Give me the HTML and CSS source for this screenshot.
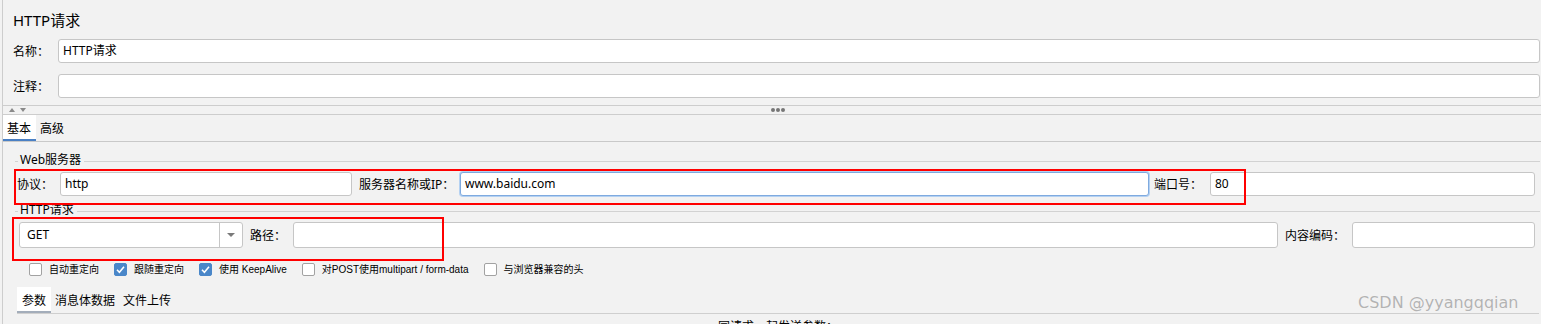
FILE: index.html
```html
<!DOCTYPE html>
<html>
<head>
    <meta charset="utf-8">
    <title>HTTP请求</title>
    <link rel="stylesheet" href="styles.css">
</head>
<body>
    <div class="frame">
        <div class="title">HTTP请求</div>

        <div class="row row-name">
            <label class="lbl lbl-top">名称：</label>
            <div class="input grow">HTTP请求</div>
        </div>
        <div class="row row-comment">
            <label class="lbl lbl-top">注释：</label>
            <div class="input grow"></div>
        </div>

        <div class="splitter">
            <span class="arrow-up"></span>
            <span class="arrow-down"></span>
            <span class="dots"><i></i><i></i><i></i></span>
        </div>

        <div class="tabs">
            <div class="tab active">基本</div>
            <div class="tab">高级</div>
        </div>

        <div class="group group-server">Web服务器</div>
        <div class="row row-server">
            <label class="lbl lbl-protocol">协议：</label>
            <div class="input in-protocol">http</div>
            <label class="lbl lbl-host">服务器名称或IP：</label>
            <div class="input focus in-host">www.baidu.com</div>
            <label class="lbl lbl-port">端口号：</label>
            <div class="input grow">80</div>
        </div>

        <div class="group group-request">HTTP请求</div>
        <div class="row row-request">
            <div class="select">
                <span class="select-value">GET</span>
                <span class="select-btn"><span class="caret"></span></span>
            </div>
            <label class="lbl lbl-path">路径：</label>
            <div class="input grow"></div>
            <label class="lbl lbl-enc">内容编码：</label>
            <div class="input in-enc"></div>
        </div>

        <div class="checks">
            <label class="cb"><span class="box"></span>自动重定向</label>
            <label class="cb"><span class="box checked"><svg viewBox="0 0 13 13" width="13" height="13"><polyline points="3,6.8 5.4,9.2 10,3.8" fill="none" stroke="#fff" stroke-width="1.6"/></svg></span>跟随重定向</label>
            <label class="cb"><span class="box checked"><svg viewBox="0 0 13 13" width="13" height="13"><polyline points="3,6.8 5.4,9.2 10,3.8" fill="none" stroke="#fff" stroke-width="1.6"/></svg></span>使用 KeepAlive</label>
            <label class="cb"><span class="box"></span>对POST使用multipart / form-data</label>
            <label class="cb"><span class="box"></span>与浏览器兼容的头</label>
        </div>

        <div class="subtabs">
            <div class="subtab active">参数</div>
            <div class="subtab">消息体数据</div>
            <div class="subtab">文件上传</div>
        </div>
        <div class="caption">同请求一起发送参数：</div>

        <!-- red annotation boxes drawn over the form -->
        <div class="mark mark-server"></div>
        <div class="mark mark-request"></div>
    </div>

    <div class="watermark">CSDN @yyangqqian</div>
</body>
</html>
```

FILE: styles.css
```css
* {
    box-sizing: border-box;
}

body {
    margin: 0;
    height: 324px;
    overflow: hidden;
    background-color: #f2f2f2;
    font-family: "Noto Sans", "Noto Sans CJK SC", sans-serif;
    font-size: 12px;
    color: #000;
}

.frame {
    position: relative;
    height: 324px;
    margin-left: 2px;
    border-left: 1px solid #cdcdcd;
    overflow: hidden;
}

.title {
    height: 32px;
    padding: 8px 0 0 10px;
    font-size: 15px;
    line-height: 24px;
}

/* form rows */
.row {
    display: flex;
    align-items: center;
}

.row-name {
    margin-top: 7px;
    height: 24px;
    padding: 0 1px 0 10px;
}

.row-comment {
    margin-top: 11px;
    height: 24px;
    padding: 0 1px 0 10px;
}

.row-server {
    margin-top: 4px;
    height: 24px;
    padding: 0 6px 0 14px;
}

.row-request {
    margin-top: 4px;
    height: 26px;
    padding: 0 6px 0 16px;
}

.lbl {
    flex: none;
    white-space: nowrap;
}

.lbl-top { width: 45px; }
.lbl-protocol { width: 43px; }
.lbl-host { width: 101px; margin-left: 7px; }
.lbl-port { width: 56px; margin-left: 5px; }
.lbl-path { width: 43px; margin-left: 7px; }
.lbl-enc { width: 67px; margin-left: 7px; }

.input {
    height: 100%;
    padding-left: 4px;
    line-height: 22px;
    background-color: #fff;
    border: 1px solid #c6c6c6;
    border-radius: 3px;
    white-space: nowrap;
    overflow: hidden;
}

.grow { flex: 1; }
.in-protocol { width: 292px; }
.in-host { width: 689px; }
.in-enc { width: 183px; }

.input.focus {
    border-color: #7faadf;
    box-shadow: 0 0 0 1px #b4d1f2;
}

.select {
    display: flex;
    width: 224px;
    height: 100%;
    background-color: #fff;
    border: 1px solid #c6c6c6;
    border-radius: 3px;
}

.select-value {
    flex: 1;
    padding-left: 7px;
    line-height: 24px;
}

.select-btn {
    width: 23px;
    display: flex;
    align-items: center;
    justify-content: center;
    border-left: 1px solid #c6c6c6;
}

.caret {
    width: 0;
    height: 0;
    border-left: 4px solid transparent;
    border-right: 4px solid transparent;
    border-top: 4px solid #7a7a7a;
}

/* split handle */
.splitter {
    display: flex;
    align-items: center;
    gap: 5px;
    margin-top: 7px;
    height: 10px;
    padding-left: 6px;
    border-top: 1px solid #cdcdcd;
    border-bottom: 1px solid #cdcdcd;
}

.arrow-up {
    width: 0;
    height: 0;
    border-left: 3px solid transparent;
    border-right: 3px solid transparent;
    border-bottom: 4px solid #8a8a8a;
}

.arrow-down {
    width: 0;
    height: 0;
    border-left: 3px solid transparent;
    border-right: 3px solid transparent;
    border-top: 4px solid #8a8a8a;
}

.dots {
    display: flex;
    gap: 1px;
    margin-left: 740px;
}

.dots i {
    width: 4px;
    height: 4px;
    border-radius: 50%;
    background-color: #767676;
}

/* tabs */
.tabs {
    display: flex;
    height: 27px;
    border-bottom: 1px solid #c9c9c9;
}

.tab {
    height: 26px;
    padding: 3px 5px 0 4px;
    line-height: 21px;
    border-bottom: 2px solid transparent;
}

.tab.active {
    background-color: #fff;
    border-bottom-color: #4a80c4;
}

/* titled groups */
.group {
    display: flex;
    height: 16px;
    line-height: 16px;
    padding: 0 1px 0 12px;
}

.group::before,
.group::after {
    content: "";
    height: 9px;
    border-bottom: 1px solid #d2d2d2;
}

.group::before {
    width: 3px;
    margin-right: 2px;
}

.group::after {
    flex: 1;
    margin-left: 3px;
}

.group-server { margin-top: 10px; }
.group-request { margin-top: 6px; }

/* checkboxes */
.checks {
    display: flex;
    gap: 15px;
    height: 13px;
    margin-top: 15px;
    padding-left: 26px;
    font-family: "Liberation Sans", "Noto Sans CJK SC", sans-serif;
    font-size: 10px;
    line-height: 13px;
}

.cb {
    display: flex;
    align-items: center;
    gap: 7px;
    white-space: nowrap;
}

.box {
    width: 13px;
    height: 13px;
    background-color: #fff;
    border: 1px solid #a2a2a2;
    border-radius: 2px;
}

.box.checked {
    background-color: #4a87c9;
    border-color: #4a87c9;
}

.box svg {
    display: block;
    margin: -1px;
}

/* lower tabs */
.subtabs {
    display: flex;
    height: 27px;
    margin: 11px 2px 0 14px;
    border-bottom: 1px solid #cfcfcf;
}

.subtab {
    height: 26px;
    padding: 3px 4px 0;
    line-height: 21px;
    border-bottom: 2px solid transparent;
}

.subtab.active {
    padding: 3px 5px 0;
    background-color: #fff;
    border-bottom-color: #a3adba;
}

.caption {
    margin: 4px 2px 0 14px;
    text-align: center;
    line-height: 18px;
}

/* annotation overlays */
.mark {
    position: absolute;
    border: 2px solid #ff0000;
}

.mark-server {
    left: 11px;
    top: 169px;
    width: 1232px;
    height: 36px;
}

.mark-request {
    left: 9px;
    top: 217px;
    width: 432px;
    height: 44px;
}

.watermark {
    position: absolute;
    left: 1358px;
    top: 293px;
    font-family: "DejaVu Sans", sans-serif;
    font-size: 16px;
    line-height: 20px;
    color: #b3b3b3;
    text-shadow: 0 0 1px #fff;
}
```
